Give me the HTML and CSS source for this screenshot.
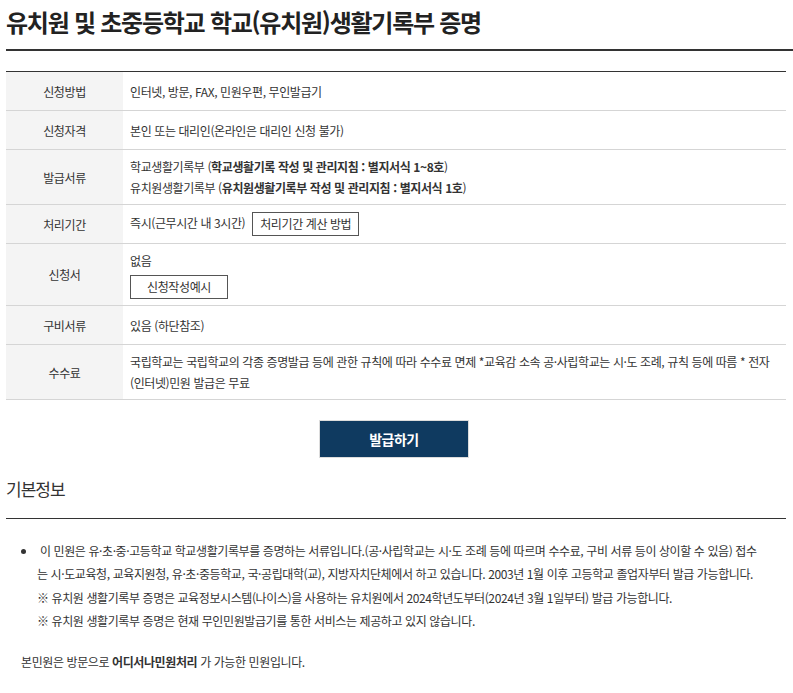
FILE: index.html
```html
<!DOCTYPE html>
<html lang="ko">
<head>
    <meta charset="UTF-8">
    <meta name="viewport" content="width=device-width, initial-scale=1.0">
    <title>유치원 및 초중등학교 학교(유치원)생활기록부 증명</title>
    <link rel="stylesheet" href="styles.css">
</head>
<body>
    <div class="page">
        <h1 class="page-title">유치원 및 초중등학교 학교(유치원)생활기록부 증명</h1>

        <table class="info-table">
            <tbody>
                <tr>
                    <th>신청방법</th>
                    <td>인터넷, 방문, FAX, 민원우편, 무인발급기</td>
                </tr>
                <tr>
                    <th>신청자격</th>
                    <td>본인 또는 대리인(온라인은 대리인 신청 불가)</td>
                </tr>
                <tr>
                    <th>발급서류</th>
                    <td>
                        학교생활기록부 (<b>학교생활기록 작성 및 관리지침 : 별지서식 1~8호</b>)<br>
                        유치원생활기록부 (<b>유치원생활기록부 작성 및 관리지침 : 별지서식 1호</b>)
                    </td>
                </tr>
                <tr>
                    <th>처리기간</th>
                    <td>즉시(근무시간 내 3시간) <button type="button" class="btn-line">처리기간 계산 방법</button></td>
                </tr>
                <tr class="row-form">
                    <th>신청서</th>
                    <td>
                        없음
                        <div><button type="button" class="btn-line btn-wide">신청작성예시</button></div>
                    </td>
                </tr>
                <tr>
                    <th>구비서류</th>
                    <td>있음 (하단참조)</td>
                </tr>
                <tr>
                    <th>수수료</th>
                    <td>국립학교는 국립학교의 각종 증명발급 등에 관한 규칙에 따라 수수료 면제 *교육감 소속 공·사립학교는 시·도 조례, 규칙 등에 따름 * 전자(인터넷)민원 발급은 무료</td>
                </tr>
            </tbody>
        </table>

        <div class="action">
            <button type="button" class="btn-issue">발급하기</button>
        </div>

        <h2 class="section-title">기본정보</h2>
        <ul class="notice">
            <li>
                &nbsp;이 민원은 유·초·중·고등학교 학교생활기록부를 증명하는 서류입니다.(공·사립학교는 시·도 조례 등에 따르며 수수료, 구비 서류 등이 상이할 수 있음) 접수는 시·도교육청, 교육지원청, 유·초·중등학교, 국·공립대학(교), 지방자치단체에서 하고 있습니다. 2003년 1월 이후 고등학교 졸업자부터 발급 가능합니다.<br>
                ※ 유치원 생활기록부 증명은 교육정보시스템(나이스)을 사용하는 유치원에서 2024학년도부터(2024년 3월 1일부터) 발급 가능합니다.<br>
                ※ 유치원 생활기록부 증명은 현재 무인민원발급기를 통한 서비스는 제공하고 있지 않습니다.
            </li>
        </ul>
        <p class="note">본민원은 방문으로 <b>어디서나민원처리</b> 가 가능한 민원입니다.</p>
    </div>
</body>
</html>
```

FILE: styles.css
```css
:root {
    --text: #333333;
    --line: #d5d5d5;
    --dark-line: #333333;
    --navy: #0f3a60;
}

* {
    margin: 0;
    padding: 0;
    box-sizing: border-box;
}

body {
    font-family: "Noto Sans CJK KR", "Noto Sans", sans-serif;
    color: var(--text);
    background: #ffffff;
    font-size: 12px;
    letter-spacing: -0.4px;
}

.page {
    padding-left: 6px;
}

.page-title {
    font-size: 24px;
    font-weight: 700;
    color: #222222;
    letter-spacing: -1.25px;
    line-height: 34px;
    padding-top: 5px;
    padding-bottom: 10px;
    border-bottom: 2px solid var(--dark-line);
}

.info-table {
    width: 780px;
    margin-top: 20px;
    border-collapse: collapse;
    border-top: 1px solid var(--dark-line);
    border-bottom: 1px solid var(--dark-line);
}

.info-table th,
.info-table td {
    height: 39px;
    padding: 6px 7px;
    border-bottom: 1px solid var(--line);
    line-height: 21px;
    vertical-align: middle;
    text-align: left;
}

.info-table th {
    width: 117px;
    background: #f4f4f4;
    font-weight: 400;
    text-align: center;
}

.info-table b {
    font-weight: 700;
}

.row-form td {
    padding-top: 6px;
    padding-bottom: 6px;
}

.btn-line {
    display: inline-block;
    height: 24px;
    padding: 0 7px;
    margin-left: 4px;
    border: 1px solid #555555;
    background: #ffffff;
    color: var(--text);
    font-family: inherit;
    font-size: 12px;
    letter-spacing: -0.4px;
    line-height: 22px;
    vertical-align: middle;
}

.btn-wide {
    width: 98px;
    margin: 4px 0 0;
}

.action {
    display: flex;
    justify-content: center;
    width: 776px;
    margin-top: 20px;
}

.btn-issue {
    width: 150px;
    height: 38px;
    border: 1px solid #dcdcdc;
    background: var(--navy);
    color: #ffffff;
    font-family: inherit;
    font-size: 14px;
    font-weight: 700;
    letter-spacing: -0.5px;
}

.section-title {
    width: 780px;
    margin-top: 19px;
    padding-bottom: 17px;
    border-bottom: 1px solid var(--dark-line);
    font-size: 17px;
    font-weight: 400;
    letter-spacing: -1px;
    line-height: 24px;
}

.notice {
    width: 760px;
    margin-top: 20px;
    padding-left: 31px;
    line-height: 23.4px;
    list-style: disc;
}

.note {
    margin-top: 17px;
    padding-left: 15px;
    line-height: 24px;
}

.note b {
    font-weight: 700;
}
```
